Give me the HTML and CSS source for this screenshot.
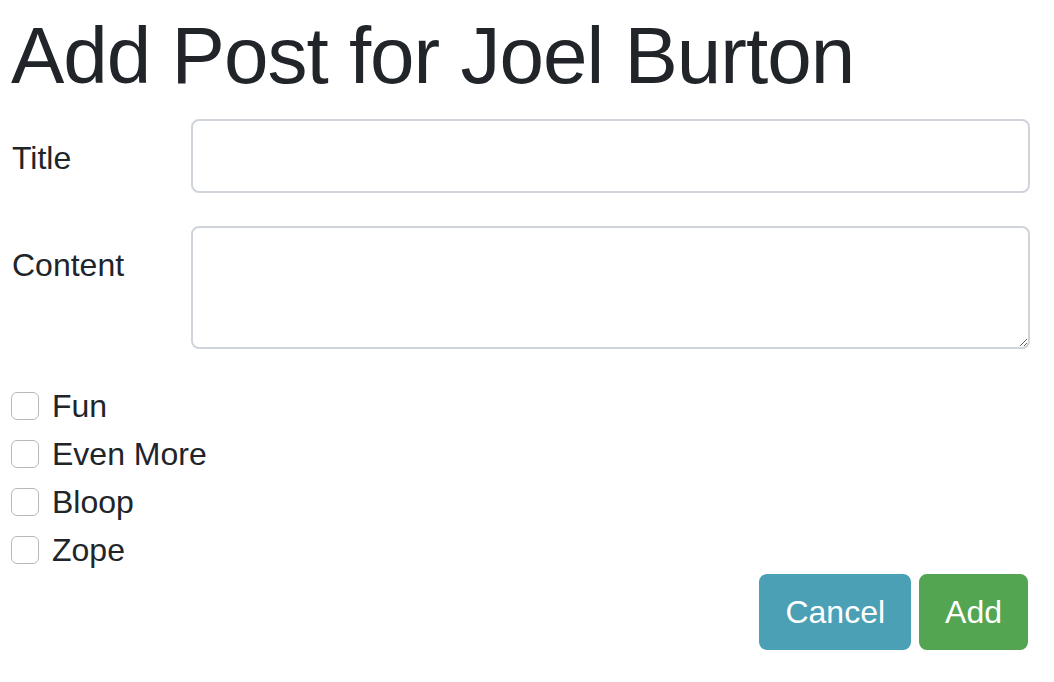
FILE: index.html
```html
<!DOCTYPE html>
<html lang="en">
<head>
<meta charset="utf-8">
<title>Add Post</title>
<link rel="stylesheet" href="styles.css">
</head>
<body>
<main class="page">
  <h1 class="title">Add Post for Joel Burton</h1>
  <form class="form">
    <div class="row">
      <label class="label" for="title">Title</label>
      <input class="control input" id="title" type="text">
    </div>
    <div class="row">
      <label class="label" for="content">Content</label>
      <textarea class="control textarea" id="content"></textarea>
    </div>
    <div class="checks">
      <label class="check"><input type="checkbox" class="box"><span>Fun</span></label>
      <label class="check"><input type="checkbox" class="box"><span>Even More</span></label>
      <label class="check"><input type="checkbox" class="box"><span>Bloop</span></label>
      <label class="check"><input type="checkbox" class="box"><span>Zope</span></label>
    </div>
    <div class="actions">
      <button type="button" class="btn btn-cancel">Cancel</button>
      <button type="submit" class="btn btn-add">Add</button>
    </div>
  </form>
</main>
</body>
</html>
```
FILE: styles.css
```css
* { box-sizing: border-box; }
html, body { margin: 0; background: #fff; }
body {
  font-family: "Liberation Sans", Arial, sans-serif;
  font-size: 32px;
  line-height: 48px;
  color: #212529;
}
.page {
  padding: 8px 24px 0 12px;
}
.title {
  margin: 0 0 15px -1px;
  font-size: 80px;
  font-weight: 400;
  line-height: 96px;
  letter-spacing: -1px;
}
.form { display: flex; flex-direction: column; }
.row {
  display: flex;
  align-items: flex-start;
  margin-bottom: 33px;
}
.label {
  width: 179px;
  flex: none;
  padding-top: 15px;
}
.control {
  flex: 1;
  border: 2px solid #ced4da;
  border-radius: 8px;
  background: #fff;
  font: inherit;
  color: inherit;
  padding: 12px 24px;
}
.input { height: 74px; }
.textarea { height: 123px; resize: vertical; }
.checks { display: flex; flex-direction: column; margin-left: -1px; }
.check {
  display: flex;
  align-items: center;
  gap: 13px;
  height: 48px;
}
.box {
  appearance: none;
  -webkit-appearance: none;
  margin: 0;
  width: 28px;
  height: 28px;
  border: 1.5px solid #b9b9b9;
  border-radius: 6px;
  background: #fff;
}
.actions {
  display: flex;
  justify-content: flex-end;
  gap: 8px;
  margin-right: 2px;
}
.btn {
  height: 76px;
  padding: 0 24px;
  border: 2px solid transparent;
  border-radius: 8px;
  font: inherit;
  color: #fff;
}
.btn-cancel { background: #4ca0b6; border-color: #4ca0b6; }
.btn-add { background: #53a551; border-color: #53a551; }
```
